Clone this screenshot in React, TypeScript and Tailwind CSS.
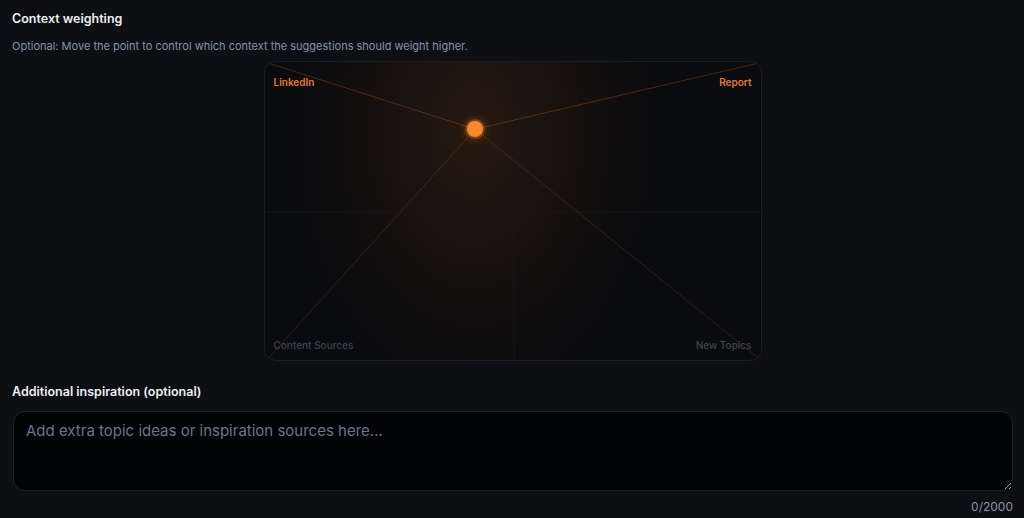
import { useState } from 'react';

const font = { fontFamily: 'Inter, "Noto Sans", sans-serif' };

function WeightPad() {
  const [pt] = useState({ x: 0.422, y: 0.224 });
  const W = 498;
  const H = 300;
  const px = pt.x * W;
  const py = pt.y * H;

  return (
    <div
      className="relative mx-auto flex h-[300px] w-[498px] flex-col justify-between overflow-hidden rounded-xl border border-[#191d26] bg-[#0a0b0e] px-[9px] pb-[9px] pt-[14px]"
      style={{
        backgroundImage: `radial-gradient(ellipse 190px 280px at ${px}px ${py}px, rgba(255,128,30,0.12), rgba(255,128,30,0.035) 60%, transparent 100%)`,
      }}
    >
      <svg className="absolute inset-0" width={W} height={H} viewBox={`0 0 ${W} ${H}`}>
        <line x1={W / 2} y1={0} x2={W / 2} y2={H} stroke="#15171c" strokeWidth="1" />
        <line x1={0} y1={H / 2} x2={W} y2={H / 2} stroke="#15171c" strokeWidth="1" />
        <line x1={0} y1={0} x2={px} y2={py} stroke="rgba(249,128,40,0.26)" strokeWidth="1" />
        <line x1={W} y1={0} x2={px} y2={py} stroke="rgba(249,128,40,0.26)" strokeWidth="1" />
        <line x1={0} y1={H} x2={px} y2={py} stroke="rgba(249,128,40,0.16)" strokeWidth="1" />
        <line x1={W} y1={H} x2={px} y2={py} stroke="rgba(249,128,40,0.16)" strokeWidth="1" />
      </svg>
      <div className="relative flex justify-between text-[10px] font-semibold leading-3 text-[#e47a2e]">
        <span>LinkedIn</span>
        <span>Report</span>
      </div>
      <div className="relative flex justify-between text-[10px] font-medium leading-3 text-[#3f434c]">
        <span>Content Sources</span>
        <span>New Topics</span>
      </div>
      <div
        className="absolute h-4 w-4 -translate-x-1/2 -translate-y-1/2 rounded-full bg-[#f7892c] shadow-[0_0_10px_rgba(249,128,40,0.55)] ring-2 ring-[#f7892c]/25"
        style={{ left: px, top: py }}
      />
    </div>
  );
}

export default function App() {
  return (
    <div
      className="flex min-h-[518px] w-full flex-col bg-[#0e0f13] pl-3 pr-[11px] pt-[11px] text-white"
      style={font}
    >
      <h3 className="text-[12.5px] font-semibold leading-4 text-[#eceef2]">Context weighting</h3>
      <p className="mt-[11px] text-[11px] leading-4 text-[#8791a4]">
        Optional: Move the point to control which context the suggestions should weight higher.
      </p>
      <div className="mt-[7px]">
        <WeightPad />
      </div>
      <h3 className="mt-[23px] text-[12.5px] font-semibold leading-4 text-[#eceef2]">
        Additional inspiration (optional)
      </h3>
      <textarea
        className="ml-px mt-[11px] block h-[80px] w-[calc(100%-1px)] rounded-xl border border-[#1e222a] bg-[#020305] px-3 py-2 text-[15px] text-[#d0d4dc] placeholder:text-[#6d7486] focus:outline-none"
        placeholder="Add extra topic ideas or inspiration sources here..."
      />
      <div className="mt-[8px] text-right text-[12px] leading-4 text-[#8b93a3]">0/2000</div>
    </div>
  );
}
